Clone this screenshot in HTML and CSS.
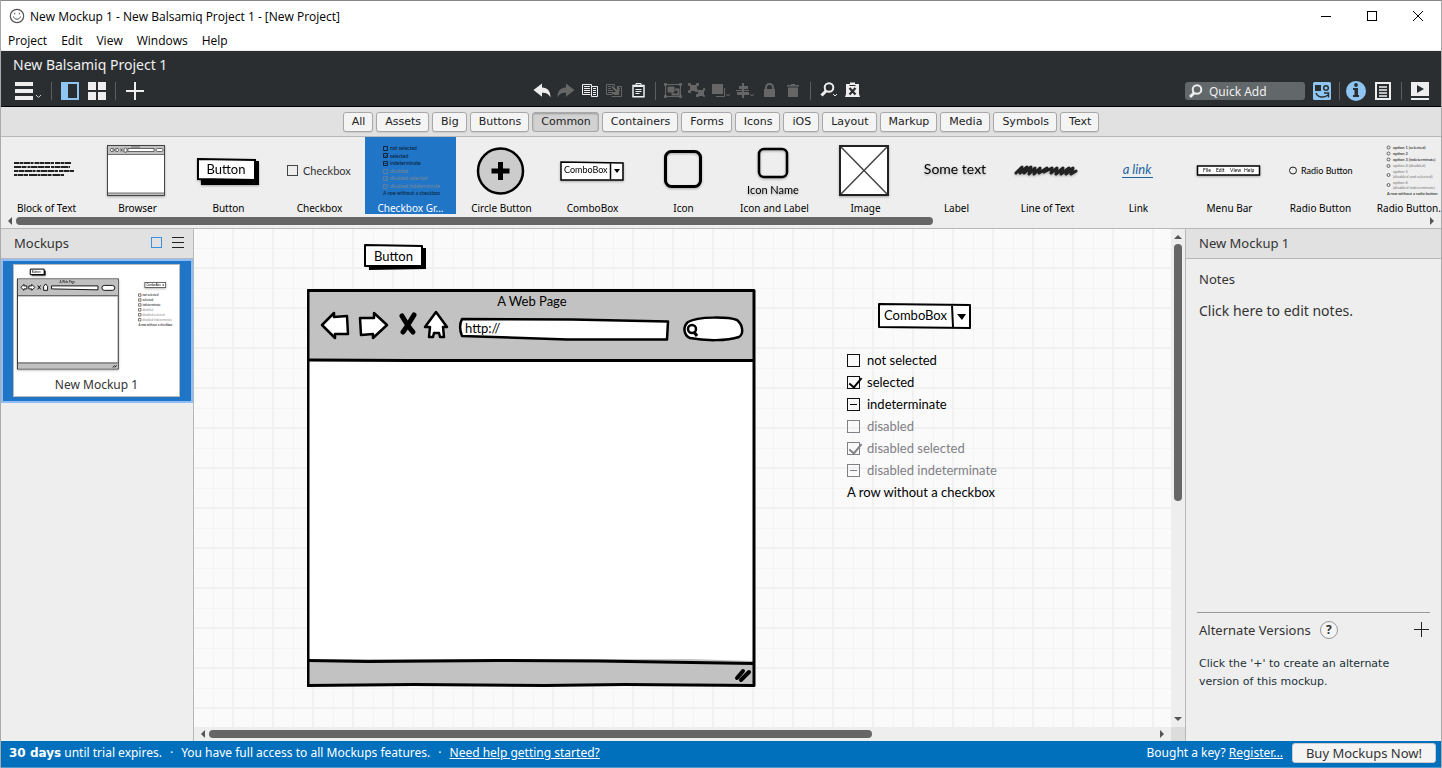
FILE: index.html
```html
<!DOCTYPE html>
<html lang="en">
<head>
<meta charset="utf-8">
<title>New Mockup 1 - New Balsamiq Project 1</title>
<link rel="stylesheet" href="styles.css">
</head>
<body>
<div class="window">
  <header class="titlebar">
    <svg class="app-icon" width="16" height="16" viewBox="0 0 16 16" fill="none" stroke="#555"><circle cx="8" cy="8" r="6.700" stroke-width="1.200"/><path d="M4.500 8.500c.8 3.600 6.200 3.600 7 0M5.700 4.800v1.600M10.300 4.800v1.600"/></svg>
    <h1 class="window-title">New Mockup 1 - New Balsamiq Project 1 - [New Project]</h1>
    <div class="window-controls">
      <button class="win-btn" aria-label="Minimize"><svg width="12" height="12" viewBox="0 0 12 12" stroke="#000" fill="none"><path d="M1 6.500h10"/></svg></button>
      <button class="win-btn" aria-label="Maximize"><svg width="12" height="12" viewBox="0 0 12 12" stroke="#000" fill="none"><rect x="1.500" y="1.500" width="9" height="9"/></svg></button>
      <button class="win-btn" aria-label="Close"><svg width="12" height="12" viewBox="0 0 12 12" stroke="#000" fill="none"><path d="M1 1l10 10M11 1L1 11"/></svg></button>
    </div>
  </header>
  <nav class="menubar">
    <button class="menu">Project</button><button class="menu">Edit</button><button class="menu">View</button><button class="menu">Windows</button><button class="menu">Help</button>
  </nav>

  <section class="toolbar">
    <h2 class="project-name">New Balsamiq Project 1</h2>
    <div class="tools">
      <div class="tools-left">
        <button class="tool tool-menu" aria-label="Project menu"><svg width="31" height="24" viewBox="0 0 31 24"><path fill="#eee" d="M1 3h18v4H1zM1 10h18v4H1zM1 17h18v4H1z"/><path d="M22 16l2.500 2.500L27 16" fill="none" stroke="#ccc"/></svg></button>
        <span class="sep"></span>
        <button class="tool" aria-label="Toggle navigator"><svg width="24" height="24" viewBox="0 0 24 24"><path fill="#8fc5f3" fill-rule="evenodd" d="M3 3h18v18H3zM10 5v14h9V5z"/></svg></button>
        <button class="tool" aria-label="Grid view"><svg width="24" height="24" viewBox="0 0 24 24"><path fill="#eee" d="M3 3h8v8H3zM13 3h8v8h-8zM3 13h8v8H3zM13 13h8v8h-8z"/></svg></button>
        <span class="sep"></span>
        <button class="tool" aria-label="New mockup"><svg width="24" height="24" viewBox="0 0 24 24"><path fill="#eee" d="M12 3h2v8h8v2h-8v8h-2v-8H4v-2h8z"/></svg></button>
      </div>
      <div class="tools-center">
        <button class="tool" aria-label="Undo"><svg width="24" height="24" viewBox="0 0 24 24"><path fill="#eee" d="M3.500 11L12 4.500v4c5.500 0 8.500 3.500 8.500 10-2-3.500-4-4.700-8.500-4.700v4z"/></svg></button>
        <button class="tool" aria-label="Redo"><svg width="24" height="24" viewBox="0 0 24 24"><path fill="#666" d="M20.500 11L12 4.500v4c-5.500 0-8.500 3.500-8.500 10 2-3.500 4-4.700 8.500-4.700v4z"/></svg></button>
        <button class="tool" aria-label="Copy"><svg width="24" height="24" viewBox="0 0 24 24" fill="none" stroke="#eee"><path d="M12.500 15.500h-8v-10h9v2M15 7.500h4.500v10h-6v-10zM6 7.500h6M6 9.500h6M6 11.500h6M6 13.500h6M15 9.500h3M15 11.500h3M15 13.500h3M15 15.500h3"/></svg></button>
        <button class="tool" aria-label="Duplicate"><svg width="24" height="24" viewBox="0 0 24 24" fill="none" stroke="#666"><path d="M10.500 15.500h-6v-10h8v2M15 7.500h4.500v10h-10M6 7.500h3M6 9.500h3M6 11.500h5M6 13.500h4M17 9.500h1M17 11.500h1M17 15.500h-5"/><path stroke-width="2" d="M10 7.500l5.500 5.500M16 8v6h-6"/></svg></button>
        <button class="tool" aria-label="Paste"><svg width="24" height="24" viewBox="0 0 24 24" fill="none" stroke="#eee"><path stroke-width="1.500" d="M7 6.500h11v11.200H7z"/><path d="M8 7.500h9M10 6V4.500h5V6M9.500 10.500h6M9.500 12.500h6M9.500 14.500h4"/></svg></button>
        <span class="sep sep-tight"></span>
        <button class="tool" aria-label="Group"><svg width="24" height="24" viewBox="0 0 24 24" fill="none" stroke="#666"><path d="M4.500 5.500h15v12h-15z"/><path fill="#666" d="M3.500 4.500h2v2h-2zM18.500 4.500h2v2h-2zM3.500 16.500h2v2h-2zM18.500 16.500h2v2h-2zM7 8h6v5H7z"/><path d="M14 10.500h3.500v5h-6v-2" stroke-width="2"/></svg></button>
        <button class="tool" aria-label="Ungroup"><svg width="24" height="24" viewBox="0 0 24 24" fill="#666" stroke="#666"><path d="M5.500 6.500h6v5h-6zM13.500 11.500h5v5h-5z"/><path d="M3.500 4.500h2v2h-2zM11.500 4.500h2v2h-2zM3.500 11.500h2v2h-2zM10.500 10.500h2v2h-2zM18.500 9.500h1v2h-1zM18.500 16.500h1v1h-1zM11.500 15.500h2v2h-2z"/></svg></button>
        <button class="tool" aria-label="Layering"><svg width="24" height="24" viewBox="0 0 24 24"><path fill="#666" d="M3 5h11v10H3z"/><path d="M15.500 9v8.500H7M17 15l2 2 2-2" fill="none" stroke="#666"/></svg></button>
        <button class="tool" aria-label="Align"><svg width="24" height="24" viewBox="0 0 24 24"><path fill="#666" d="M9 4h2v3h4v3h-4v3h5v3h-5v3H9v-3H4v-3h5v-3H6V7h3zM3 11h13v1H3z"/><path d="M17 15l2 2 2-2" fill="none" stroke="#666"/></svg></button>
        <button class="tool" aria-label="Lock"><svg width="24" height="24" viewBox="0 0 24 24"><path fill="#666" d="M7 18v-8h11v8z"/><path d="M9 11V8.500a3.500 3.500 0 0 1 7 0V11" fill="none" stroke="#666" stroke-width="2"/></svg></button>
        <button class="tool" aria-label="Delete"><svg width="24" height="24" viewBox="0 0 24 24"><path fill="#666" d="M7 8.500h10V18H7zM6 6h4V5h4v1h4v1.500H6z"/></svg></button>
        <span class="sep sep-tight"></span>
        <button class="tool" aria-label="Zoom"><svg width="24" height="24" viewBox="0 0 24 24" fill="none" stroke="#eee"><circle cx="13" cy="8.500" r="4.300" stroke-width="2"/><path d="M10 12l-4.500 4.500" stroke-width="3"/><path d="M17 15l2 2 2-2"/></svg></button>
        <button class="tool" aria-label="Toggle markup"><svg width="24" height="24" viewBox="0 0 24 24"><path fill="#eee" d="M6 5h13v10l1 3H5l1-3z"/><path fill="#eee" d="M10 3.500h5V6h-5z"/><path d="M9.500 9l6 6.500M15.500 9l-6 6.500" stroke="#2a2e31" stroke-width="2.200"/><path d="M9.500 6.500h6" stroke="#2a2e31"/></svg></button>
      </div>
      <div class="tools-right">
        <label class="quick-add">
          <svg width="18" height="18" viewBox="0 0 18 18" fill="none" stroke="#eee"><circle cx="12" cy="7.500" r="4.300" stroke-width="2"/><path d="M9 11L5 15" stroke-width="3"/></svg>
          <input class="quick-input" type="text" placeholder="Quick Add" aria-label="Quick Add">
        </label>
        <button class="tool" aria-label="UI library"><svg width="24" height="24" viewBox="0 0 24 24"><rect x="3" y="3" width="18" height="18" rx="1.500" fill="#8fc5f3"/><path fill="#2a2e31" d="M5 6h6v6H5z"/><g fill="none" stroke="#2a2e31" stroke-width="1.500"><circle cx="16" cy="9" r="2.300"/><path d="M6 14c2 5 8 5 12 2M14 14h4.500v4.500"/></g></svg></button>
        <span class="sep"></span>
        <button class="tool" aria-label="Properties"><svg width="24" height="24" viewBox="0 0 24 24"><circle cx="11" cy="12" r="10" fill="#8fc5f3"/><path fill="#2a2e31" d="M9 9h4v7h1v2H8v-2h1.500v-5H8V9z"/><circle cx="11" cy="6" r="1.900" fill="#2a2e31"/></svg></button>
        <button class="tool" aria-label="Project notes"><svg width="24" height="24" viewBox="0 0 24 24" fill="none" stroke="#eee" stroke-width="2"><path d="M4 4h14v16H4z"/><path stroke-width="1.500" d="M7 8h8M7 11h8M7 14h8M7 17h8"/></svg></button>
        <span class="sep"></span>
        <button class="tool" aria-label="Full screen"><svg width="24" height="24" viewBox="0 0 24 24"><path fill="#eee" d="M4 3h18v14H4zM4 19h18v2H4z"/><path fill="#2a2e31" d="M10 6l7 4-7 4z"/></svg></button>
      </div>
    </div>
  </section>

  <nav class="filters">
    <button class="tag">All</button><button class="tag">Assets</button><button class="tag">Big</button><button class="tag">Buttons</button><button class="tag tag-on">Common</button><button class="tag">Containers</button><button class="tag">Forms</button><button class="tag">Icons</button><button class="tag">iOS</button><button class="tag">Layout</button><button class="tag">Markup</button><button class="tag">Media</button><button class="tag">Symbols</button><button class="tag">Text</button>
  </nav>

  <section class="shelf">
    <div class="shelf-items">
      <button class="item"><svg class="art" viewBox="0 0 91 66"><g stroke="#222" stroke-width="2"><path d="M13 26h57" stroke-dasharray="5 .5 4 .5 6 .5 3 1"/><path d="M13 30h56" stroke-dasharray="7 .5 5 1 3 .5 6 .5"/><path d="M13 34h60" stroke-dasharray="4 .5 6 .5 7 .5 3 1"/><path d="M13 38h50" stroke-dasharray="3 .5 6 .5 4 1 8 .5"/></g></svg><span class="item-name">Block of Text</span></button>
      <button class="item"><svg class="art shadowed" viewBox="0 0 91 66"><rect x="15.500" y="8.500" width="57" height="50" fill="#fff" stroke="#444"/><path d="M16 9h56v8.500H16zM16 56h56v2H16z" fill="#c0c0c0"/><path d="M16 17.500h56M16 56h56M39 10h9" stroke="#555" stroke-width=".8"/><g fill="#fff" stroke="#333" stroke-width=".7"><path d="M18 13l2-2v1h2v2h-2v1zM27 13l-2-2v1h-2v2h2v1zM28.500 11.500l2 3m0-3l-2 3M32 15v-3l1.500-1 1.500 1v3z"/><rect x="36" y="11.500" width="26" height="3"/><rect x="64" y="11.500" width="7" height="3" rx="1.500"/></g></svg><span class="item-name">Browser</span></button>
      <button class="item"><svg class="art shadowed" viewBox="0 0 91 66"><path d="M17 24h59v24H18z"/><path d="M15 22l57 1v20l-57-1z" fill="#fff" stroke="#000" stroke-width="2"/><text class="sketch" x="43" y="37" font-size="13" text-anchor="middle">Button</text></svg><span class="item-name">Button</span></button>
      <button class="item"><svg class="art" viewBox="0 0 91 66"><rect x="13.500" y="28.500" width="10" height="10" fill="none" stroke="#444"/><text class="sketch" x="29" y="38" font-size="11" fill="#333">Checkbox</text></svg><span class="item-name">Checkbox</span></button>
      <button class="item item-on"><svg class="art" viewBox="0 0 91 66"><g fill="none" stroke="#0a2440"><path d="M18.500 9.500h4v4h-4zM18.500 16.500h4v4h-4zm1 2l1 1 3-3M18.500 24.500h4v4h-4zm1 2h2"/><path stroke="#5d7f9f" d="M18.500 32.500h4v4h-4zM18.500 39.500h4v4h-4zm1 2l1 1 2-2M18.500 47.500h4v4h-4zm1 2h2"/></g><g class="sketch" font-size="5" fill="#06182c"><text x="25" y="13">not selected</text><text x="25" y="20.500">selected</text><text x="25" y="28">indeterminate</text><text x="18" y="58">A row without a checkbox</text><g fill="#7c8894"><text x="25" y="36">disabled</text><text x="25" y="43">disabled selected</text><text x="25" y="51">disabled indeterminate</text></g></g></svg><span class="item-name">Checkbox Gr...</span></button>
      <button class="item"><svg class="art" viewBox="0 0 91 66"><circle cx="44.500" cy="34" r="22.500" fill="#ccc" stroke="#000" stroke-width="2.500"/><path d="M44.500 25v18M35.500 34h18" stroke="#000" stroke-width="5"/></svg><span class="item-name">Circle Button</span></button>
      <button class="item"><svg class="art shadowed" viewBox="0 0 91 66"><path d="M14 25l62 1v17H14zM63.500 26v16" fill="#fff" stroke="#000" stroke-width="1.500"/><path d="M67 32h6l-3 4z"/><text class="sketch" x="17" y="36" font-size="9">ComboBox</text></svg><span class="item-name">ComboBox</span></button>
      <button class="item"><svg class="art shadowed" viewBox="0 0 91 66"><rect x="27.500" y="14.500" width="35" height="35" rx="6" fill="none" stroke="#000" stroke-width="3"/></svg><span class="item-name">Icon</span></button>
      <button class="item"><svg class="art shadowed" viewBox="0 0 91 66"><rect x="30" y="12" width="28" height="28" rx="5" fill="none" stroke="#000" stroke-width="2.500"/><text class="sketch" x="44" y="57" font-size="11" text-anchor="middle">Icon Name</text></svg><span class="item-name">Icon and Label</span></button>
      <button class="item"><svg class="art shadowed" viewBox="0 0 91 66"><path d="M20 9h48v49H20z" fill="#fff" stroke="#222" stroke-width="2"/><path d="M21 10l46 47M67 10L21 57" stroke="#444" stroke-width="1.500"/></svg><span class="item-name">Image</span></button>
      <button class="item"><svg class="art shadowed" viewBox="0 0 91 66"><text class="sketch" x="44" y="37" font-size="14" text-anchor="middle">Some text</text></svg><span class="item-name">Label</span></button>
      <button class="item"><svg class="art shadowed" viewBox="0 0 91 66"><path d="M14 36L20 30 18 36 25 30 22 36 29 30 27 37 33 31 32 37 38 31 37 36 45 31 42 35 50 31 49 36 55 31 54 37 61 31 59 37 67 31 64 37 71 31 69 37 74 34" fill="none" stroke="#222" stroke-width="3" stroke-linecap="round" stroke-linejoin="round"/></svg><span class="item-name">Line of Text</span></button>
      <button class="item"><svg class="art" viewBox="0 0 91 66"><text class="sketch" x="44" y="37" font-size="13" font-style="italic" fill="#1c63a0" text-anchor="middle">a link</text><path d="M29 40.500h31" stroke="#1c63a0"/></svg><span class="item-name">Link</span></button>
      <button class="item"><svg class="art shadowed" viewBox="0 0 91 66"><rect x="13.500" y="29" width="62" height="9" fill="#fff" stroke="#000" stroke-width="1.500"/><g class="sketch" font-size="5"><text x="19" y="35">File</text><text x="32" y="35">Edit</text><text x="46" y="35">View</text><text x="60" y="35">Help</text></g></svg><span class="item-name">Menu Bar</span></button>
      <button class="item"><svg class="art" viewBox="0 0 91 66"><circle cx="18" cy="33.500" r="3.500" fill="none" stroke="#222"/><text class="sketch" x="26" y="37" font-size="9">Radio Button</text></svg><span class="item-name">Radio Button</span></button>
      <button class="item"><svg class="art" viewBox="0 0 91 66"><g fill="none" stroke="#444" stroke-width=".8"><circle cx="22.500" cy="10.500" r="1.500"/><circle cx="22.500" cy="16.500" r="1.500"/><circle cx="22.500" cy="22.500" r="1.500"/><circle cx="22.500" cy="29" r="1.500"/><circle cx="22.500" cy="38" r="1.500"/><circle cx="22.500" cy="48" r="1.500"/></g><g class="sketch" font-size="4"><text x="27" y="12">option 1 (selected)</text><text x="27" y="18">option 2</text><text x="27" y="24">option 3 (indeterminate)</text><text x="21" y="58">A row without a radio button</text><g fill="#777"><text x="27" y="30">option 4 (disabled)</text><text x="27" y="36">option 5</text><text x="27" y="41">(disabled and selected)</text><text x="27" y="47">option 6</text><text x="27" y="52">(disabled indeterminate)</text></g></g></svg><span class="item-name">Radio Button...</span></button>
    </div>
    <div class="scroll-x">
      <span class="arrow arrow-left"></span><div class="track"><span class="thumb thumb-shelf"></span></div><span class="arrow arrow-right"></span>
    </div>
  </section>

  <main class="workspace">
    <aside class="navigator">
      <div class="panel-head">
        <h3 class="panel-title">Mockups</h3>
        <button class="head-btn" aria-label="Thumbnails"><svg width="13" height="13" viewBox="0 0 13 13"><rect x="1.500" y="1.500" width="10" height="10" fill="none" stroke="#3c91e0"/></svg></button>
        <button class="head-btn" aria-label="List"><svg width="13" height="13" viewBox="0 0 13 13"><path d="M1 1.500h12M1 6.500h12M1 11.500h12" stroke="#222"/></svg></button>
      </div>
      <button class="thumb-card">
        <span class="thumb-paper">
          <svg class="thumb-art" viewBox="0 0 167 110">
            <g class="shadowed"><path d="M18 5h14v5H18z"/><path d="M16.500 3.500h14v5.500h-14z" fill="#fff" stroke="#000"/><text class="sketch" x="18" y="7.500" font-size="3">Button</text></g>
            <g class="shadowed"><rect x="3.500" y="13.500" width="102" height="91" fill="#fff" stroke="#333"/><path d="M4 14h101v16H4zM4 99h101v5H4z" fill="#c0c0c0"/><path d="M4 30.500h101M4 98.500h101" stroke="#333"/><text class="sketch" x="46" y="18" font-size="3">A Web Page</text>
            <g fill="#fff" stroke="#000" stroke-width=".9"><path d="M7 22l3-3v1.500h3v3h-3V25zM21 22l-3-3v1.500h-3v3h3V25zM24 20l3 4m0-4l-3 4M30 25v-4l2-2.500 2 2.500v4z"/><path d="M38 20.500h47v4l-47-1z"/><rect x="89" y="20" width="13" height="5" rx="2.500"/></g><path d="M100 103l2-2M102 103l2-2" stroke="#000"/></g>
            <g class="shadowed"><rect x="132.500" y="17" width="21" height="5" fill="#fff" stroke="#444" stroke-width=".8"/><text class="sketch" x="134" y="21" font-size="3">ComboBox</text><path d="M150 19h2l-1 1.500z"/></g>
            <g fill="none" stroke="#444" stroke-width=".7"><path d="M126 28.500h2.500v2.500H126zM126 33.500h2.500V36H126zM126 38.500h2.500V41H126zM126 43.500h2.500V46H126zM126 48.500h2.500V51H126zM126 53.500h2.500V56H126z"/></g>
            <g class="sketch" font-size="3"><text x="130" y="31">not selected</text><text x="130" y="36">selected</text><text x="130" y="41">indeterminate</text><text x="126" y="61">A row without a checkbox</text><g fill="#888"><text x="130" y="46">disabled</text><text x="130" y="51">disabled selected</text><text x="130" y="56">disabled indeterminate</text></g></g>
          </svg>
          <span class="thumb-name">New Mockup 1</span>
        </span>
      </button>
    </aside>

    <section class="editor">
      <div class="canvas">
        <div class="widget w-button">
          <svg class="frame" viewBox="0 0 63 27"><path d="M4 4h58v21l-57 1z"/><path d="M1 1l57 1v20L1 22z" fill="#fff" stroke="#000" stroke-width="2" stroke-linejoin="round"/></svg>
          <button class="w-button-label">Button</button>
        </div>
        <div class="widget w-browser">
          <svg class="frame" viewBox="0 0 450 400">
            <path d="M2 2h445v393H1z" fill="#c2c2c2"/>
            <path d="M2 71h445v301l-64-2H2z" fill="#fff"/>
            <g fill="none" stroke="#000" stroke-width="3" stroke-linejoin="round"><path d="M1 1.500h446v395l-130-1-80 1-130-1-106 1z"/><path d="M2 71l100 .5 345 0M1 371.500l60 1 130-1 100 .5 156 2.500"/></g>
            <g fill="#fff" stroke="#000" stroke-width="2.500" stroke-linejoin="round"><path d="M15 36l12-12v4l13-1 1 18H28v4zM80 36L67 24v5l-14 0 1 17 12-1v4zM118 38l11-15 11 15h-4l1 10h-4l-1-4h-5l-1 4h-4l1-10z"/><path d="M155 30l110 .5 96 2-1 18-100 0-105-3.500c-2-5-3-11 0-17z"/><path d="M381 33c10-6 41-5 49-2 6 5 7 14 2 17-12 4-34 4-49 1-7-3-7-12-2-16z"/></g>
            <path d="M95 27c3 5 8 13 11 16M107 26c-3 5-8 13-11 17" stroke="#000" stroke-width="5" stroke-linecap="round"/>
            <circle cx="385" cy="40" r="4" fill="#fff" stroke="#000" stroke-width="2.500"/><path d="M387 43l3 4" stroke="#000" stroke-width="3"/>
            <path d="M430 389l6-7M434 391l8-8" stroke="#000" stroke-width="4" stroke-linecap="round"/>
          </svg>
          <span class="w-page-title">A Web Page</span>
          <input class="w-url" type="text" value="http://" aria-label="Address">
        </div>
        <div class="widget w-combo">
          <svg class="frame" viewBox="0 0 94 28"><path d="M2 2l91 1v23l-91-1zM75 3l1 22" fill="#fff" stroke="#000" stroke-width="2" stroke-linejoin="round"/><path d="M80 12h9l-4 6z"/></svg>
          <select class="w-select" aria-label="ComboBox"><option>ComboBox</option></select>
        </div>
        <div class="widget w-checks">
          <label class="check"><input class="box" type="checkbox">not selected</label>
          <label class="check"><input class="box box-tick" type="checkbox" checked>selected</label>
          <label class="check"><input class="box box-dash" type="checkbox">indeterminate</label>
          <label class="check check-off"><input class="box" type="checkbox" disabled>disabled</label>
          <label class="check check-off"><input class="box box-tick" type="checkbox" checked disabled>disabled selected</label>
          <label class="check check-off"><input class="box box-dash" type="checkbox" disabled>disabled indeterminate</label>
          <span class="check">A row without a checkbox</span>
        </div>
      </div>
      <div class="scroll-y"><span class="arrow arrow-up"></span><div class="track-y"><span class="thumb-v"></span></div><span class="arrow arrow-down"></span></div>
      <div class="scroll-x"><span class="arrow arrow-left"></span><div class="track"><span class="thumb thumb-canvas"></span></div><span class="arrow arrow-right"></span></div>
      <div class="corner"></div>
    </section>

    <aside class="inspector">
      <div class="panel-head"><h3 class="panel-title">New Mockup 1</h3></div>
      <div class="notes">
        <h4 class="notes-title">Notes</h4>
        <p class="notes-body">Click here to edit notes.</p>
      </div>
      <div class="alternates">
        <div class="alt-head">
          <h4 class="notes-title">Alternate Versions</h4>
          <button class="help">?</button>
          <button class="add-alt" aria-label="Add alternate version"><svg width="16" height="16" viewBox="0 0 16 16"><path d="M7.500 0v15M0 7.500h15" stroke="#222"/></svg></button>
        </div>
        <p class="alt-text">Click the '+' to create an alternate version of this mockup.</p>
      </div>
    </aside>
  </main>

  <footer class="trial">
    <p class="trial-text trial-status"><span><b class="trial-days">30 days</b> until trial expires.</span><span>·</span><span>You have full access to all Mockups features.</span><span>·</span><a class="trial-link" href="#help">Need help getting started?</a></p>
    <p class="trial-text">Bought a key? <a class="trial-link" href="#register">Register...</a></p>
    <button class="buy">Buy Mockups Now!</button>
  </footer>
</div>
</body>
</html>
```
FILE: styles.css
```css
* { box-sizing: border-box; }
body { margin: 0; font-family: "Noto Sans", "Open Sans", sans-serif; font-size: 12px; color: #333; }
h1, h2, h3, h4, p { margin: 0; font-weight: 400; }
button { margin: 0; padding: 0; border: 0; background: none; font: inherit; color: inherit; }
svg { display: block; }
.sketch { font-family: Lato, sans-serif; }

.window { display: flex; flex-direction: column; height: 100vh; min-height: 640px; border: 1px solid #aaa; border-top-color: #888; border-bottom: 0; background: #fff; overflow: hidden; }

.titlebar { display: flex; align-items: center; height: 30px; flex: none; padding-left: 8px; }
.window-title { flex: 1; margin-left: 5px; font-family: "Open Sans", sans-serif; font-size: 12px; color: #000; }
.window-controls { display: flex; }
.win-btn { display: flex; align-items: center; justify-content: center; width: 46px; height: 29px; }
.menubar { display: flex; align-items: center; height: 20px; flex: none; padding-left: 7px; gap: 14px; font-family: "Open Sans", sans-serif; font-size: 12px; color: #000; border-bottom: 1px solid #eee; }

.toolbar { flex: none; height: 56px; background: #2a2e31; border-bottom: 1px solid #000; color: #f0f0f0; }
.project-name { height: 28px; line-height: 28px; padding-left: 12px; font-size: 14px; }
.tools { display: grid; grid-template-columns: 1fr auto 1fr; align-items: center; height: 24px; }
.tools-left, .tools-center, .tools-right { display: flex; align-items: center; }
.tools-left { padding-left: 13px; gap: 3px; }
.tools-center { margin-right: 48px; }
.tools-right { justify-content: flex-end; padding-right: 10px; gap: 3px; margin-left: -48px; }
.sep { width: 1px; height: 18px; margin: 0 3px; background: #5c5f61; }
.sep-tight { margin: 0 5px; }
.tools-right .sep { margin: 0 2px; }
.quick-add { display: flex; align-items: center; width: 120px; height: 18px; margin-right: 2px; border-radius: 3px; background: #62676a; }
.quick-input { width: 90px; min-width: 0; padding: 0 0 0 6px; border: 0; outline: 0; background: none; font: inherit; color: #fff; }
.quick-input::placeholder { color: #f0f0f0; opacity: 1; }

.filters { display: flex; flex: none; align-items: center; justify-content: center; gap: 3px; height: 30px; background: #e1e1e1; border-bottom: 1px solid #b8b8b8; }
.tag { height: 20px; padding: 0 7px 0 8px; border: 1px solid #a8a8a8; border-radius: 3px; background: #f4f4f4; font-family: "DejaVu Sans", sans-serif; font-size: 11px; line-height: 18px; color: #222; box-shadow: 0 1px 1px #ccc; }
.tag-on { background: #d2d2d2; box-shadow: inset 0 1px 2px #999; }

.shelf { flex: none; height: 92px; background: #eee; border-bottom: 1px solid #b8b8b8; }
.shelf-items { display: flex; height: 77px; overflow-x: clip; overflow-y: visible; }
.item { display: flex; flex-direction: column; flex: none; align-items: center; width: 91px; height: 77px; color: #000; }
.item-on { background: #2075c7; color: #fff; }
.art { width: 91px; height: 66px; flex: none; }
.item-name { font-size: 10px; line-height: 11px; white-space: nowrap; }
.shadowed { filter: drop-shadow(0 1px 1px rgba(0, 0, 0, .3)); }

.scroll-x { display: flex; align-items: center; height: 14px; padding: 0 7px; background: #eee; }
.track { display: flex; flex: 1; margin: 0 4px; }
.thumb { height: 8px; border-radius: 4px; background: #666; }
.thumb-shelf { width: 65%; }
.thumb-canvas { width: 70%; }
.arrow { width: 0; height: 0; border: 4px solid transparent; }
.arrow-left { border-left-width: 0; border-right-color: #555; }
.arrow-right { border-right-width: 0; border-left-color: #555; }
.arrow-up { border-top-width: 0; border-bottom-color: #555; }
.arrow-down { border-bottom-width: 0; border-top-color: #555; }

.workspace { display: grid; grid-template-columns: 193px 1fr 256px; flex: 1; min-height: 0; background: #eee; }
.navigator { border-right: 1px solid #b8b8b8; }
.panel-head { display: flex; align-items: center; height: 30px; padding: 0 9px 2px 13px; gap: 8px; background: #e1e1e1; border-bottom: 1px solid #b8b8b8; }
.panel-title { flex: 1; font-size: 13px; }
.thumb-card { display: block; width: 100%; height: 144px; border: 2px solid #8fbdf7; background: #2075c7; padding: 3px 11px 4px 10px; }
.thumb-paper { display: flex; flex-direction: column; height: 133px; background: #fff; border: 1px solid #bbb; }
.thumb-art { width: 100%; height: 110px; }
.thumb-name { font-size: 12px; line-height: 20px; }

.editor { display: grid; grid-template-columns: 1fr 14px; grid-template-rows: 1fr 14px; min-width: 0; min-height: 0; }
.canvas {
  position: relative; overflow: hidden; background-color: #fafafa;
  background-image: linear-gradient(90deg, #f1f1f1 2px, transparent 2px), linear-gradient(#f1f1f1 2px, transparent 2px), linear-gradient(90deg, #f4f4f4 1px, transparent 1px), linear-gradient(#f4f4f4 1px, transparent 1px);
  background-size: 40px 40px;
  background-position: 38px 0, 0 38px, 19px 0, 0 19px;
}
.scroll-y { display: flex; flex-direction: column; align-items: center; padding: 6px 0; background: #eee; }
.track-y { display: flex; flex: 1; margin: 5px 0; }
.thumb-v { width: 8px; height: 55%; border-radius: 4px; background: #666; }
.corner { background: #dcdcdc; }

.widget { position: absolute; font-family: Lato, sans-serif; font-size: 13px; color: #000; }
.frame { position: absolute; inset: 0; width: 100%; height: 100%; }
.w-button { left: 170px; top: 15px; width: 63px; height: 27px; }
.w-button-label { position: relative; width: 59px; height: 24px; }
.w-browser { left: 113px; top: 60px; width: 450px; height: 400px; }
.w-page-title { position: relative; display: block; padding-top: 3px; line-height: 18px; text-align: center; }
.w-url { position: relative; display: block; width: 190px; height: 20px; margin: 8px 0 0 158px; padding: 0; border: 0; background: none; font: inherit; color: #000; }
.w-combo { left: 683px; top: 73px; width: 94px; height: 28px; }
.w-select { position: relative; width: 90px; height: 26px; padding: 0 0 0 7px; border: 0; appearance: none; background: none; font: inherit; color: #000; }
.w-checks { left: 653px; top: 120px; display: flex; flex-direction: column; }
.check { display: flex; align-items: center; gap: 7px; height: 22px; white-space: nowrap; }
.check-off { color: #808086; }
.box { position: relative; width: 13px; height: 13px; margin: 0; border: 1px solid #111; appearance: none; }
.check-off .box { border-color: #808086; }
.box-tick::before { content: ""; position: absolute; left: 4px; top: -2px; width: 5px; height: 11px; border: solid #000; border-width: 0 2px 2px 0; transform: rotate(40deg); }
.box-dash::before { content: ""; position: absolute; left: 2px; top: 5px; width: 7px; height: 1px; background: #000; }
.check-off .box-tick::before { border-color: #808086; }
.check-off .box-dash::before { background: #808086; }

.inspector { display: flex; flex-direction: column; border-left: 1px solid #b8b8b8; }
.inspector .panel-head { flex: none; }
.notes { flex: 1; padding: 10px 13px; }
.notes-title { font-size: 13px; line-height: 20px; }
.notes-body { margin-top: 12px; font-size: 14px; line-height: 20px; }
.alternates { height: 129px; margin: 0 11px; padding: 7px 0 0 2px; border-top: 1px solid #999; }
.alt-head { display: flex; align-items: center; gap: 9px; }
.help { width: 18px; height: 18px; border: 1px solid #999; border-radius: 50%; background: #f4f4f4; font-size: 12px; font-weight: 700; line-height: 16px; }
.add-alt { margin-left: auto; }
.alt-text { margin-top: 15px; font-family: "DejaVu Sans", sans-serif; font-size: 11px; line-height: 18px; color: #1b3238; }

.trial { display: flex; flex: none; align-items: center; height: 27px; padding: 0 5px 2px 8px; background: #0070bd; border-bottom: 1px solid #4f9bd0; color: #fff; gap: 9px; }
.trial-text { font-size: 12px; line-height: 20px; white-space: nowrap; }
.trial-status { display: flex; flex: 1; gap: 8px; }
.trial-days { font-family: "DejaVu Sans", sans-serif; }
.trial-link { color: #fff; }
.buy { width: 144px; height: 20px; border: 1px solid #ccc; border-radius: 3px; background: #f4f4f4; font-size: 13px; line-height: 18px; color: #333; }
```
